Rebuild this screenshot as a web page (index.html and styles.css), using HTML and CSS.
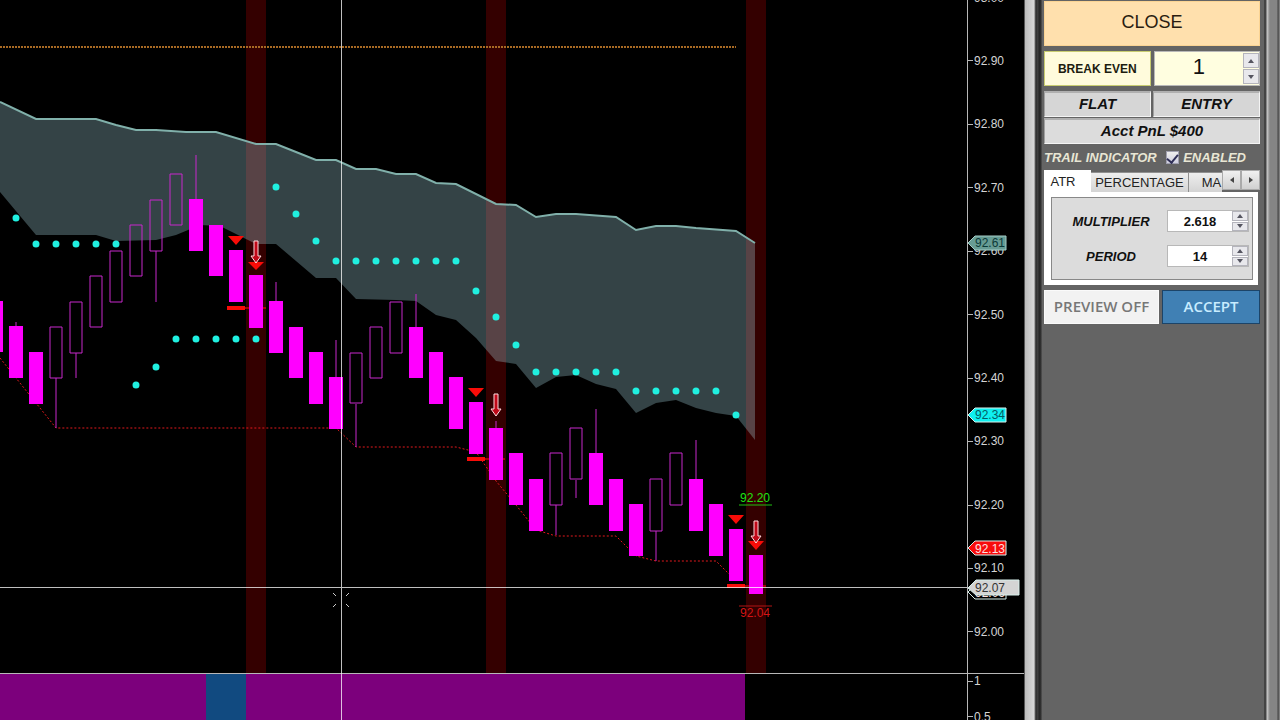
FILE: index.html
```html
<!DOCTYPE html>
<html lang="en">
<head>
    <meta charset="UTF-8">
    <meta name="viewport" content="width=device-width, initial-scale=1.0">
    <title>Chart Trader</title>
    <link rel="stylesheet" href="styles.css">
</head>
<body>
  <main class="chart">
    <svg class="plot" viewBox="0 0 1024 720" preserveAspectRatio="xMinYMin slice" role="img" aria-label="Price chart">
      <!-- signal bars -->
      <path class="signal-bar" d="M246 0h20v673h-20zM486 0h20v673h-20zM746 0h20v673h-20z" />

      <!-- trend cloud -->
      <path class="cloud" d="M0 102L36 119H96L116 125L136 130H156L186 132H216L256 144H276L296 152L316 160H336L356 169H376L396 174H416L436 183L456 184L496 204L516 205L536 217L556 214H576L616 217L636 230L656 226H676L696 228L736 231L755 243V440L736 416L716 413L696 408L676 400L656 403L636 413L616 389L596 384L576 375L556 377L536 388L516 364L496 361L476 338L456 320L436 315L416 301L396 300L356 299L336 278H316L276 244H256L220 226L200 225L176 235L156 240L116 241L96 235H36L0 192z" />
      <path class="cloud-line" d="M0 102L36 119H96L116 125L136 130H156L186 132H216L256 144H276L296 152L316 160H336L356 169H376L396 174H416L436 183L456 184L496 204L516 205L536 217L556 214H576L616 217L636 230L656 226H676L696 228L736 231L755 243" />

      <!-- target and stop lines -->
      <path class="target-line" d="M0 47H736" />
      <path class="stop-line" d="M0 358L56 428H336L356 447H456L476 452L496 481L516 505L536 530L556 536H616L636 556L656 561H716L736 581" />

      <!-- candles -->
      <path class="wick" d="M16 322V327M56 378V428M76 353V378M156 251V302M196 155V200M276 282V302M336 340V378M356 404V447M416 294V327M496 421V429M556 505V535M576 480V498M596 409V454M656 531V561M696 440V480" />
      <path class="candle-up" d="M50 327h12v51h-12zM70 302h12v51h-12zM90 276h12v51h-12zM110 251h12v51h-12zM130 225h12v51h-12zM150 200h12v51h-12zM170 174h12v51h-12zM350 353h12v50h-12zM370 327h12v51h-12zM390 302h12v51h-12zM550 453h12v52h-12zM570 428h12v51h-12zM650 479h12v52h-12zM670 453h12v52h-12z" />
      <path class="candle-down" d="M-11 301h14v51h-14zM9 326h14v52h-14zM29 352h14v52h-14zM189 199h14v52h-14zM209 225h14v51h-14zM229 250h14v52h-14zM249 275h14v53h-14zM269 301h14v52h-14zM289 327h14v51h-14zM309 352h14v52h-14zM329 377h14v52h-14zM409 327h14v51h-14zM429 352h14v52h-14zM449 377h14v52h-14zM469 402h14v52h-14zM489 428h14v52h-14zM509 453h14v52h-14zM529 479h14v52h-14zM589 453h14v52h-14zM609 479h14v52h-14zM629 504h14v52h-14zM689 479h14v52h-14zM709 504h14v52h-14zM729 529h14v52h-14zM749 555h14v39h-14z" />

      <!-- atr trail dots -->
      <path class="dots" d="M16 218h0M36 244h0M56 244h0M76 244h0M96 244h0M116 244h0M136 385h0M156 367h0M176 339h0M196 339h0M216 339h0M236 339h0M256 339h0M276 187h0M296 214h0M316 241h0M336 261h0M356 261h0M376 261h0M396 261h0M416 261h0M436 261h0M456 261h0M476 291h0M496 317h0M516 345h0M536 372h0M556 372h0M576 372h0M596 372h0M616 372h0M636 391h0M656 391h0M676 391h0M696 391h0M716 391h0M736 415h0" />

      <!-- sell markers -->
      <path class="marker" d="M228 236h16l-8 9zM248 262h16l-8 8zM468 388h16l-8 9zM728 515h16l-8 9zM748 541h16l-8 9z" />
      <path class="marker" d="M227 306h18v4h-18zM467 457h18v4h-18zM727 584h18v4h-18z" />
      <path class="marker-dim" d="M245 307h4v2h-4zM263 307h3v2h-3zM485 458h4v2h-4zM503 458h2v2h-2zM745 585h4v2h-4zM763 585h3v2h-3z" />
      <path class="arrow" d="M254 241h4v15h3l-5 7l-5-7h3zM494 394h4v15h3l-5 7l-5-7h3zM754 521h4v15h3l-5 7l-5-7h3z" />

      <text class="entry-label" x="740" y="502">92.20</text>
      <path class="entry-line" d="M739 505H772" />
      <text class="exit-label" x="740" y="617">92.04</text>
      <path class="exit-line" d="M739 606H772" />

      <!-- lower panel -->
      <path class="trend-down" d="M0 674H745V720H0z" />
      <path class="trend-flat" d="M206 674h40v46h-40z" />
      <path class="axis" d="M0 673H1024M967 0V720" />

      <!-- price axis -->
      <path class="axis" d="M967 -3h6M967 60h6M967 124h6M967 187h6M967 251h6M967 314h6M967 378h6M967 441h6M967 505h6M967 568h6M967 631h6M967 681h6M967 716h6" />
      <g class="price">
        <text x="974" y="2">93.00</text>
        <text x="974" y="65">92.90</text>
        <text x="974" y="128">92.80</text>
        <text x="974" y="192">92.70</text>
        <text x="974" y="255">92.60</text>
        <text x="974" y="319">92.50</text>
        <text x="974" y="382">92.40</text>
        <text x="974" y="445">92.30</text>
        <text x="974" y="509">92.20</text>
        <text x="974" y="572">92.10</text>
        <text x="974" y="636">92.00</text>
        <text x="974" y="685">1</text>
        <text x="974" y="721">0.5</text>
      </g>

      <!-- crosshair -->
      <path class="crosshair" d="M0 587H967M341 0V720" />
      <path class="cursor" d="M333 593l3 3M349 593l-3 3M333 607l3-3M349 607l-3-3" />

      <g class="tag">
        <path class="tag-cloud" d="M968 243l7-7h31v14h-31z" />
        <text class="tag-cloud-text" x="975" y="247">92.61</text>
        <path class="tag-trail" d="M968 415l7-7h31v14h-31z" />
        <text class="tag-trail-text" x="975" y="419">92.34</text>
        <path class="tag-stop" d="M968 548l7-7h31v14h-31z" />
        <text class="tag-stop-text" x="975" y="553">92.13</text>
        <path class="tag-last" d="M968 592l7-7h31v14h-31z" />
        <text class="tag-stop-text" x="975" y="597">92.06</text>
        <path class="tag-cursor" d="M968 588l8-8h43v15h-43z" />
        <text class="tag-cursor-text" x="975" y="592">92.07</text>
      </g>
    </svg>
  </main>

  <div class="divider"></div>

  <aside class="panel">
    <button type="button" class="btn close">CLOSE</button>

    <div class="row">
      <button type="button" class="btn break-even">BREAK EVEN</button>
      <div class="spinner spinner-big">
        <input class="spinner-input" type="text" value="1" aria-label="Break even ticks">
        <div class="arrows">
          <button type="button" class="step" aria-label="Increase"><svg viewBox="0 0 6 4"><path d="M0 4L3 0L6 4z" /></svg></button>
          <button type="button" class="step" aria-label="Decrease"><svg viewBox="0 0 6 4"><path d="M0 0L3 4L6 0z" /></svg></button>
        </div>
      </div>
    </div>

    <div class="status">
      <div class="cell">FLAT</div>
      <div class="cell">ENTRY</div>
      <div class="cell cell-wide">Acct PnL $400</div>
    </div>

    <div class="trail">
      <span>TRAIL INDICATOR</span>
      <input class="check" type="checkbox" id="enabled" checked>
      <label for="enabled">ENABLED</label>
    </div>

    <div class="tabs">
      <button type="button" class="tab tab-active">ATR</button>
      <button type="button" class="tab tab-percentage">PERCENTAGE</button>
      <button type="button" class="tab tab-ma">MA</button>
      <button type="button" class="scroll" aria-label="Scroll left"><svg viewBox="0 0 4 6"><path d="M4 0L0 3L4 6z" /></svg></button>
      <button type="button" class="scroll" aria-label="Scroll right"><svg viewBox="0 0 4 6"><path d="M0 0L4 3L0 6z" /></svg></button>
    </div>

    <div class="tab-page">
      <div class="group">
        <div class="field">
          <label for="multiplier">MULTIPLIER</label>
          <div class="spinner">
            <input class="spinner-input" id="multiplier" type="text" value="2.618">
            <div class="arrows">
              <button type="button" class="step" aria-label="Increase"><svg viewBox="0 0 6 4"><path d="M0 4L3 0L6 4z" /></svg></button>
              <button type="button" class="step" aria-label="Decrease"><svg viewBox="0 0 6 4"><path d="M0 0L3 4L6 0z" /></svg></button>
            </div>
          </div>
        </div>
        <div class="field">
          <label for="period">PERIOD</label>
          <div class="spinner">
            <input class="spinner-input" id="period" type="text" value="14">
            <div class="arrows">
              <button type="button" class="step" aria-label="Increase"><svg viewBox="0 0 6 4"><path d="M0 4L3 0L6 4z" /></svg></button>
              <button type="button" class="step" aria-label="Decrease"><svg viewBox="0 0 6 4"><path d="M0 0L3 4L6 0z" /></svg></button>
            </div>
          </div>
        </div>
      </div>
    </div>

    <div class="row">
      <button type="button" class="btn preview">PREVIEW OFF</button>
      <button type="button" class="btn accept">ACCEPT</button>
    </div>
  </aside>

  <div class="window-edge"></div>
</body>
</html>
```

FILE: styles.css
```css
* {
  box-sizing: border-box;
}

body {
  background-color: #000;
  display: flex;
  font-family: "Liberation Sans", Arial, sans-serif;
  height: 100vh;
  margin: 0;
  overflow: hidden;
}

button,
input {
  border-radius: 0;
  font-family: inherit;
  margin: 0;
  padding: 0;
}

/* chart */
.chart {
  flex: 1;
  min-width: 0;
}

.plot {
  display: block;
  height: 100%;
  width: 100%;
}

.plot text {
  font-size: 12px;
}

.signal-bar {
  fill: #340000;
}

.cloud {
  fill: rgba(173, 223, 233, 0.3);
}

.cloud-line {
  fill: none;
  stroke: #80b0aa;
  stroke-width: 2;
}

.target-line {
  stroke: #a86a24;
  stroke-dasharray: 2 1;
  stroke-width: 2;
}

.stop-line {
  fill: none;
  stroke: #e0181c;
  stroke-dasharray: 2 2;
}

.wick {
  stroke: #c828cc;
}

.candle-up {
  fill: none;
  stroke: #c828cc;
}

.candle-down {
  fill: #f0f;
}

.dots {
  stroke: #20f0e0;
  stroke-linecap: round;
  stroke-width: 7;
}

.marker {
  fill: #f80c08;
}

.marker-dim {
  fill: #a00404;
}

.arrow {
  fill: #c00818;
  stroke: #ffd8dc;
}

.entry-label {
  fill: #22e012;
}

.entry-line {
  stroke: #20c010;
}

.exit-label {
  fill: #d41414;
}

.exit-line {
  stroke: #b01414;
}

.trend-down {
  fill: #7c007c;
}

.trend-flat {
  fill: #114a80;
}

.axis {
  shape-rendering: crispEdges;
  stroke: #b8b8b8;
}

.price {
  fill: #d4d4d4;
}

.crosshair {
  shape-rendering: crispEdges;
  stroke: rgba(255, 255, 255, 0.75);
}

.cursor {
  stroke: #ccc;
}

.tag path {
  stroke: #d8f0ec;
}

.tag .tag-cloud {
  fill: #679c94;
  stroke: #a4ccc6;
}

.tag-cloud-text {
  fill: #0c3a38;
}

.tag-trail {
  fill: #0ff0f0;
}

.tag-trail-text {
  fill: #045c64;
}

.tag-stop {
  fill: #f80c0c;
}

.tag-stop-text {
  fill: #ffe0e0;
}

.tag-last {
  fill: #000;
}

.tag-cursor {
  fill: #d4d4d4;
}

.tag-cursor-text {
  fill: #333;
}

/* window frames */
.divider {
  background: linear-gradient(to right, #555 0 1px, #bbb 1px, #d8d8d8 10px, #777 11px, #222 12px, #444 13px, #222 16px, #555 18px);
  width: 18px;
}

.window-edge {
  background: linear-gradient(to right, #444 0 2px, #ccc 3px, #999 5px, #858585 6px, #858585 13px, #444 14px, #909090 16px);
  width: 16px;
}

/* trader panel */
.panel {
  background-color: #646464;
  display: flex;
  flex-direction: column;
  gap: 5px;
  padding: 1px 4px 0 2px;
  width: 222px;
}

.btn {
  font-size: 15px;
  font-weight: 600;
  white-space: nowrap;
}

.close {
  background-color: #ffe0ad;
  border: 1px solid #fbd493;
  color: #2a1c10;
  font-size: 18px;
  font-weight: normal;
  height: 45px;
  padding-bottom: 3px;
}

.row {
  display: flex;
  gap: 3px;
}

.break-even {
  background-color: #fffbdc;
  border: 1px solid #c8cc70;
  color: #1c1c10;
  flex: 1;
  font-size: 12px;
  height: 35px;
}

.spinner {
  background-color: #fff;
  border: 1px solid #b8b8b8;
  display: flex;
  height: 22px;
  width: 82px;
}

.spinner-input {
  background: none;
  border: 0;
  color: #111;
  flex: 1;
  font-size: 13px;
  font-weight: bold;
  min-width: 0;
  outline: 0;
  text-align: center;
}

.arrows {
  display: flex;
  flex-direction: column;
  gap: 1px;
  width: 16px;
}

.step {
  align-items: center;
  background-color: #e8e8ec;
  border: 1px solid #b4b4bc;
  display: flex;
  flex: 1;
  justify-content: center;
  min-height: 0;
}

.step svg {
  fill: #555560;
  height: 4px;
  width: 6px;
}

.spinner-big {
  background-color: #fffee0;
  flex: 1;
  height: 35px;
  padding: 1px 0;
}

.spinner-big .spinner-input {
  font-size: 22px;
  font-weight: normal;
  padding-bottom: 4px;
}

.status {
  display: grid;
  gap: 1px 2px;
  grid-template-columns: 1fr 1fr;
}

.cell {
  background-color: #d6d6d6;
  border: 1px solid #f4f4f4;
  border-left-color: #a0a0a0;
  border-top: 2px solid #b0b0b0;
  color: #111;
  font-size: 15px;
  font-style: italic;
  font-weight: bold;
  line-height: 22px;
  padding-bottom: 1px;
  text-align: center;
}

.cell-wide {
  background-color: #dcdcdc;
  grid-column: span 2;
}

.trail {
  align-items: center;
  color: #e8e6d4;
  display: flex;
  font-size: 13px;
  font-style: italic;
  font-weight: 600;
  height: 16px;
  white-space: nowrap;
}

.check {
  appearance: none;
  background: #dcdce8 linear-gradient(#eee, #d0d0e0);
  border: 1px solid #a0a0b0;
  height: 13px;
  margin: 0 4px 0 auto;
  width: 13px;
}

.check:checked::after {
  border: solid #303058;
  border-width: 0 2px 2px 0;
  content: "";
  display: block;
  height: 9px;
  margin: 0 auto;
  transform: rotate(40deg);
  width: 5px;
}

.trail label {
  margin-right: 14px;
}

.tabs {
  align-items: flex-end;
  display: flex;
  height: 22px;
}

.tab {
  background: linear-gradient(#eee, #d4d4d4);
  border: 1px solid #909090;
  border-bottom: 0;
  border-left-width: 0;
  color: #222;
  font-size: 13px;
  height: 20px;
}

.tab-active {
  background: #fff;
  border-color: #fff;
  height: 22px;
  padding-right: 8px;
  width: 47px;
}

.tab-percentage {
  flex: 1;
}

.tab-ma {
  border-right: 0;
  padding-left: 12px;
  width: 33px;
}

.scroll {
  align-items: center;
  align-self: flex-start;
  background: linear-gradient(#f0f0f0, #d0d0d0);
  border: 1px solid #aaa;
  display: flex;
  height: 20px;
  justify-content: center;
  width: 19px;
}

.scroll svg {
  fill: #444;
  height: 6px;
  width: 4px;
}

.tab-page {
  background-color: #fff;
  margin: -5px 2px 0 0;
  padding: 5px;
  padding-left: 7px;
}

.group {
  background-color: #dcdcdc;
  border: 1px solid #888;
  display: flex;
  flex-direction: column;
  gap: 13px;
  padding: 12px 3px;
}

.field {
  align-items: center;
  color: #111;
  display: flex;
  font-size: 13px;
  font-style: italic;
  font-weight: bold;
}

.field label {
  flex: 1;
  text-align: center;
}

.preview {
  background-color: #f2f2f2;
  border: 1px solid #fafafa;
  color: #777;
  height: 34px;
  width: 115px;
}

.accept {
  background-color: #4080b4;
  border: 1px solid #1c4468;
  color: #c8ecff;
  flex: 1;
  height: 34px;
}

.preview,
.accept {
  font-family: "Open Sans", sans-serif;
  padding-bottom: 3px;
}
```
